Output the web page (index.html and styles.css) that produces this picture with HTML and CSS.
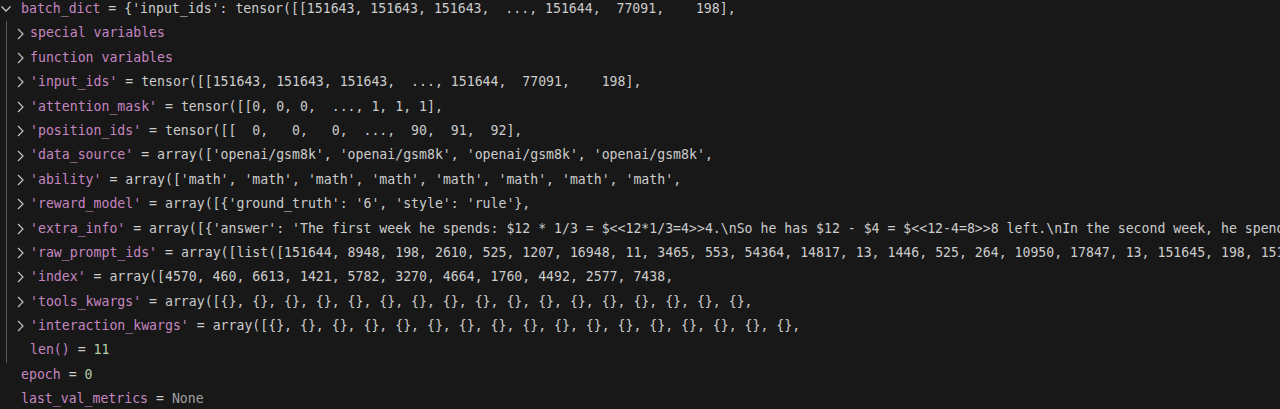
FILE: index.html
```html
<!DOCTYPE html>
<html lang="en">
<head>
  <meta charset="UTF-8" />
  <title>Variables</title>
  <link rel="stylesheet" href="styles.css">
</head>
<body>

<div class="variables">
  <div class="row top">
    <span class="twistie"><svg class="down" width="12" height="12" viewBox="0 0 12 12"><path d="M1.5 3.5l4.5 4.5 4.5-4.5" /></svg></span>
    <span class="name">batch_dict</span><span class="eq"> = </span><span class="value">{'input_ids': tensor([[151643, 151643, 151643,  ..., 151644,  77091,    198],</span>
  </div>

  <div class="children">
    <div class="row">
      <span class="twistie"><svg width="10" height="12" viewBox="0 0 10 12"><path d="M3 1l5 5-5 5" /></svg></span>
      <span class="name">special variables</span>
    </div>
    <div class="row">
      <span class="twistie"><svg width="10" height="12" viewBox="0 0 10 12"><path d="M3 1l5 5-5 5" /></svg></span>
      <span class="name">function variables</span>
    </div>
    <div class="row">
      <span class="twistie"><svg width="10" height="12" viewBox="0 0 10 12"><path d="M3 1l5 5-5 5" /></svg></span>
      <span class="name">'input_ids'</span><span class="eq"> = </span><span class="value">tensor([[151643, 151643, 151643,  ..., 151644,  77091,    198],</span>
    </div>
    <div class="row">
      <span class="twistie"><svg width="10" height="12" viewBox="0 0 10 12"><path d="M3 1l5 5-5 5" /></svg></span>
      <span class="name">'attention_mask'</span><span class="eq"> = </span><span class="value">tensor([[0, 0, 0,  ..., 1, 1, 1],</span>
    </div>
    <div class="row">
      <span class="twistie"><svg width="10" height="12" viewBox="0 0 10 12"><path d="M3 1l5 5-5 5" /></svg></span>
      <span class="name">'position_ids'</span><span class="eq"> = </span><span class="value">tensor([[  0,   0,   0,  ...,  90,  91,  92],</span>
    </div>
    <div class="row">
      <span class="twistie"><svg width="10" height="12" viewBox="0 0 10 12"><path d="M3 1l5 5-5 5" /></svg></span>
      <span class="name">'data_source'</span><span class="eq"> = </span><span class="value">array(['openai/gsm8k', 'openai/gsm8k', 'openai/gsm8k', 'openai/gsm8k',</span>
    </div>
    <div class="row">
      <span class="twistie"><svg width="10" height="12" viewBox="0 0 10 12"><path d="M3 1l5 5-5 5" /></svg></span>
      <span class="name">'ability'</span><span class="eq"> = </span><span class="value">array(['math', 'math', 'math', 'math', 'math', 'math', 'math', 'math',</span>
    </div>
    <div class="row">
      <span class="twistie"><svg width="10" height="12" viewBox="0 0 10 12"><path d="M3 1l5 5-5 5" /></svg></span>
      <span class="name">'reward_model'</span><span class="eq"> = </span><span class="value">array([{'ground_truth': '6', 'style': 'rule'},</span>
    </div>
    <div class="row">
      <span class="twistie"><svg width="10" height="12" viewBox="0 0 10 12"><path d="M3 1l5 5-5 5" /></svg></span>
      <span class="name">'extra_info'</span><span class="eq"> = </span><span class="value">array([{'answer': 'The first week he spends: $12 * 1/3 = $&lt;&lt;12*1/3=4&gt;&gt;4.\nSo he has $12 - $4 = $&lt;&lt;12-4=8&gt;&gt;8 left.\nIn the second week, he spend</span>
    </div>
    <div class="row">
      <span class="twistie"><svg width="10" height="12" viewBox="0 0 10 12"><path d="M3 1l5 5-5 5" /></svg></span>
      <span class="name">'raw_prompt_ids'</span><span class="eq"> = </span><span class="value">array([list([151644, 8948, 198, 2610, 525, 1207, 16948, 11, 3465, 553, 54364, 14817, 13, 1446, 525, 264, 10950, 17847, 13, 151645, 198, 151</span>
    </div>
    <div class="row">
      <span class="twistie"><svg width="10" height="12" viewBox="0 0 10 12"><path d="M3 1l5 5-5 5" /></svg></span>
      <span class="name">'index'</span><span class="eq"> = </span><span class="value">array([4570, 460, 6613, 1421, 5782, 3270, 4664, 1760, 4492, 2577, 7438,</span>
    </div>
    <div class="row">
      <span class="twistie"><svg width="10" height="12" viewBox="0 0 10 12"><path d="M3 1l5 5-5 5" /></svg></span>
      <span class="name">'tools_kwargs'</span><span class="eq"> = </span><span class="value">array([{}, {}, {}, {}, {}, {}, {}, {}, {}, {}, {}, {}, {}, {}, {}, {}, {},</span>
    </div>
    <div class="row">
      <span class="twistie"><svg width="10" height="12" viewBox="0 0 10 12"><path d="M3 1l5 5-5 5" /></svg></span>
      <span class="name">'interaction_kwargs'</span><span class="eq"> = </span><span class="value">array([{}, {}, {}, {}, {}, {}, {}, {}, {}, {}, {}, {}, {}, {}, {}, {}, {},</span>
    </div>
    <div class="row">
      <span class="twistie"></span>
      <span class="name">len()</span><span class="eq"> = </span><span class="number">11</span>
    </div>
  </div>

  <div class="row top">
    <span class="twistie"></span>
    <span class="name">epoch</span><span class="eq"> = </span><span class="number">0</span>
  </div>
  <div class="row top">
    <span class="twistie"></span>
    <span class="name">last_val_metrics</span><span class="eq"> = </span><span class="none">None</span>
  </div>
</div>

</body>
</html>
```

FILE: styles.css
```css
html, body {
  margin: 0;
  padding: 0;
  background: #181818;
  overflow: hidden;
}

.variables {
  margin-top: -3px;
  font-family: "DejaVu Sans Mono", "Liberation Mono", monospace;
  font-size: 13.2px;
  color: #cccccc;
}

.row {
  display: flex;
  align-items: center;
  height: 24.4px;
  line-height: 24.4px;
  white-space: pre;
  overflow: hidden;
}

.twistie {
  flex: none;
  display: flex;
  align-items: center;
  width: 23px;
  height: 100%;
}

.twistie svg {
  flex: none;
  margin-left: 8px;
  fill: none;
  stroke: #c5c5c5;
  stroke-width: 1.2;
}

.top .twistie {
  width: 21px;
}

.top .twistie svg.down {
  margin-left: 0;
  stroke-width: 1.3;
}

.children {
  margin-left: 6px;
  border-left: 1px solid #585858;
}

.name {
  color: #c586c0;
}

.eq {
  color: #cccccc;
}

.value {
  color: #cccccc;
}

.number {
  color: #b5cea8;
}

.none {
  color: #a0a0a0;
}
```
